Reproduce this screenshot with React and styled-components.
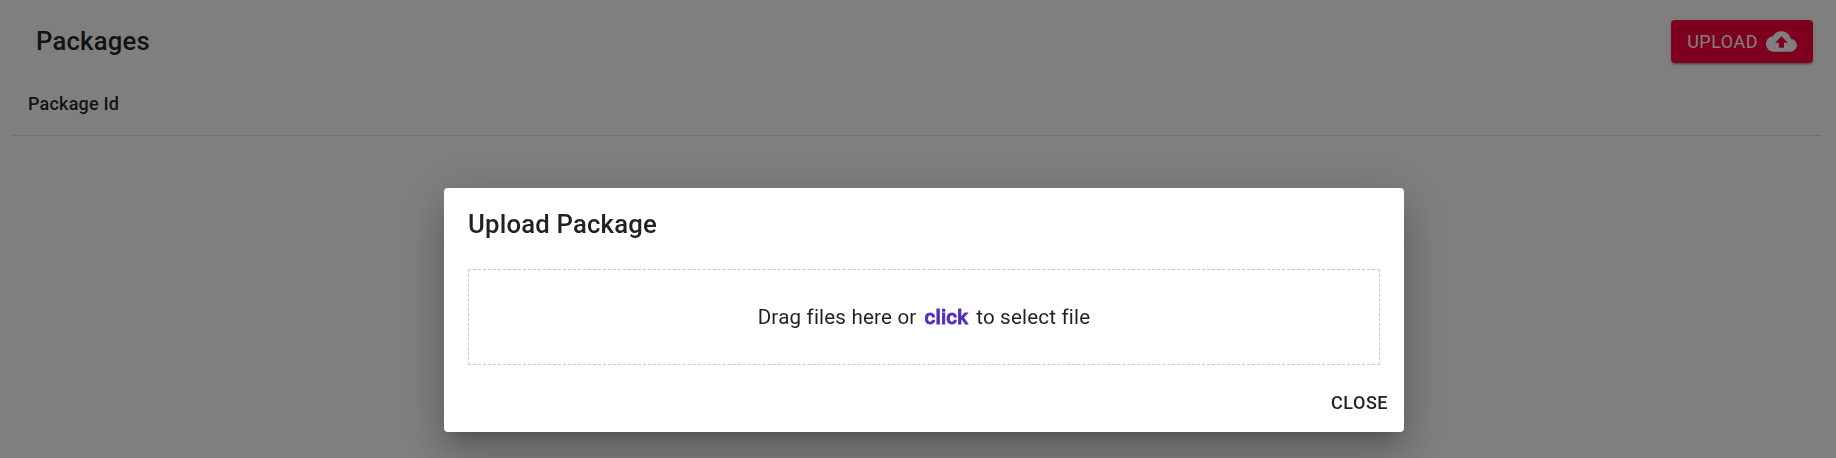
import React from "react";
import styled, { createGlobalStyle } from "styled-components";

const Global = createGlobalStyle`
  *, *::before, *::after { box-sizing: border-box; }
  body { margin: 0; background: #fff; font-family: Roboto, sans-serif; color: rgba(0,0,0,.87); overflow: hidden; -webkit-font-smoothing: antialiased; }
`;
const Page = styled.main`
  height: 458px;
  padding: 8px 15px 0 12px;
`;
const Toolbar = styled.header`
  display: flex;
  align-items: center;
  justify-content: space-between;
  height: 67px;
  padding: 0 8px 0 24px;
`;
const Title = styled.h2`
  margin: 0;
  font-size: 25.714px;
  font-weight: 500;
  line-height: 1.6;
  letter-spacing: 0.0075em;
`;
const Button = styled.button`
  display: inline-flex;
  align-items: center;
  gap: 8px;
  border: 0;
  font: 500 18px/1.75 Roboto, sans-serif;
  letter-spacing: 0.02857em;
  text-transform: uppercase;
  border-radius: 4px;
  color: rgba(0,0,0,.87);
  background: transparent;
  padding: 6px 8px;
`;
const UploadButton = styled(Button)`
  height: 43px;
  padding: 0 16px;
  font-weight: 400;
  color: #fff;
  background: #ff003d;
  box-shadow: 0 3px 1px -2px rgba(0,0,0,.2), 0 2px 2px rgba(0,0,0,.14), 0 1px 5px rgba(0,0,0,.12);
`;
const ColumnHead = styled.div`
  height: 61px;
  padding: 15px 16px;
  border-bottom: 1px solid #e0e0e0;
  font-size: 18px;
  font-weight: 500;
  line-height: 27px;
  letter-spacing: 0.01071em;
`;
const Backdrop = styled.div`
  position: fixed;
  inset: 0;
  background: rgba(0,0,0,.5);
`;
const Dialog = styled.section`
  position: absolute;
  left: 444px;
  top: 188px;
  width: 960px;
  height: 244px;
  border-radius: 4px;
  background: #fff;
  box-shadow: 0 11px 15px -7px rgba(0,0,0,.2), 0 24px 38px 3px rgba(0,0,0,.14), 0 9px 46px 8px rgba(0,0,0,.12);
`;
const DialogTitle = styled(Title)`
  padding: 16px 24px;
`;
const DropZone = styled.div`
  display: flex;
  align-items: center;
  justify-content: center;
  height: 96px;
  margin: 8px 24px 0;
  border: 1px dashed #c8c8c8;
  font-size: 20.571px;
  letter-spacing: 0.00938em;
`;
const Link = styled.b`
  margin: 0 8px;
  color: #512db8;
  font-weight: 500;
  -webkit-text-stroke: 0.8px currentColor;
`;
const Actions = styled.footer`
  display: flex;
  justify-content: flex-end;
  padding: 16px 8px 8px;
`;

export default function App() {
  return (
    <>
      <Global />
      <Page>
        <Toolbar>
          <Title>Packages</Title>
          <UploadButton>
            Upload
            <svg width="30.86" height="30.86" viewBox="0 0 24 24" fill="currentColor"><path d="M19.35 10.04C18.67 6.59 15.64 4 12 4 9.11 4 6.6 5.64 5.35 8.04 2.34 8.36 0 10.91 0 14c0 3.31 2.69 6 6 6h13c2.76 0 5-2.24 5-5 0-2.64-2.05-4.78-4.65-4.96zM14 13v4h-4v-4H7l5-5 5 5h-3z" /></svg>
          </UploadButton>
        </Toolbar>
        <ColumnHead>Package Id</ColumnHead>
      </Page>
      <Backdrop>
        <Dialog role="dialog">
          <DialogTitle>Upload Package</DialogTitle>
          <DropZone><span>Drag files here or</span><Link>click</Link><span>to select file</span></DropZone>
          <Actions><Button>Close</Button></Actions>
        </Dialog>
      </Backdrop>
    </>
  );
}
